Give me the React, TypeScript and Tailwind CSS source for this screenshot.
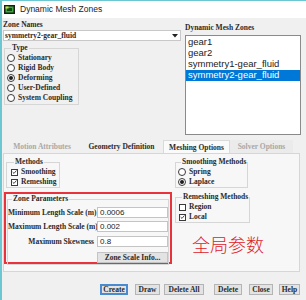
import React from "react";

const F = "font-['Liberation_Serif',serif] font-bold text-[7.5px] leading-[10px] text-[#2a2a2a] whitespace-nowrap";
const FD = "font-['Liberation_Serif',serif] font-bold text-[7.5px] leading-[13px] text-[#a8a8a8] whitespace-nowrap";
const FT = "font-['Liberation_Serif',serif] font-bold text-[7.5px] leading-[13px] text-[#2a2a2a] whitespace-nowrap";

function Radio({ checked, label }: { checked?: boolean; label: string }) {
  return (
    <div className="flex items-center h-[10px]">
      <span className="w-[8px] h-[8px] rounded-full border border-[#3a3a3a] bg-white flex items-center justify-center shrink-0">
        {checked && <span className="w-[4px] h-[4px] rounded-full bg-[#1e1e1e]" />}
      </span>
      <span className={`${F} ml-[3px]`}>{label}</span>
    </div>
  );
}

function Check({ checked, label }: { checked?: boolean; label: string }) {
  return (
    <div className="flex items-center h-[10px]">
      <span className="w-[7px] h-[7px] border border-[#3a3a3a] bg-white flex items-center justify-center shrink-0">
        {checked && (
          <svg width="6" height="6" viewBox="0 0 6 6">
            <path d="M0.8 3.1 L2.4 4.7 L5.3 1.2" stroke="#222" strokeWidth="1" fill="none" />
          </svg>
        )}
      </span>
      <span className={`${F} ml-[3px]`}>{label}</span>
    </div>
  );
}

function Btn({ label, w, primary, className }: { label: string; w: string; primary?: boolean; className: string }) {
  return (
    <div
      className={`${w} h-[11px] ${primary ? "border-2 border-[#4a8bd0]" : "border border-[#b4b4b4]"} bg-[#e3e3e3] flex items-center justify-center ${className}`}
    >
      <span className={F}>{label}</span>
    </div>
  );
}

export default function App() {
  return (
    <div className="w-[306px] h-[300px] bg-[#f0f0f0] border-l-2 border-t border-[#6cc7d3] flex flex-col overflow-hidden">
      {/* title bar */}
      <div className="h-[17px] bg-white flex items-center shrink-0">
        <svg width="11" height="9" viewBox="0 0 11 9" className="ml-[2px]">
          <rect x="0" y="0" width="11" height="9" fill="#1b1b1b" />
          <rect x="1.5" y="1.5" width="8" height="6" fill="#3aa83a" />
          <rect x="3" y="3" width="5" height="3" fill="#0d4d12" />
          <rect x="1.5" y="1.5" width="3" height="2" fill="#d9d930" />
        </svg>
        <span className="ml-[5px] font-['Liberation_Sans',sans-serif] text-[8.5px] text-[#222]">Dynamic Mesh Zones</span>
      </div>

      {/* top area */}
      <div className="flex shrink-0">
        <div className="ml-[1px] w-[178px] flex flex-col">
          <div className={`${F} mt-[2px]`}>Zone Names</div>
          <div className="h-[11px] bg-white border border-[#c8c8c8] flex items-center justify-between">
            <span className={`${F} ml-[1px]`}>symmetry2-gear_fluid</span>
            <svg width="6" height="4" viewBox="0 0 6 4" className="mr-[2px]">
              <path d="M0 0 L6 0 L3 3.5 Z" fill="#222" />
            </svg>
          </div>
          <fieldset className="mt-[2px] ml-[1px] w-[75px] border border-[#d6d6d6] pl-[2px] pb-[1px]">
            <legend className={`${F} ml-[4px] px-[1px]`}>Type</legend>
            <Radio label="Stationary" />
            <Radio label="Rigid Body" />
            <Radio checked label="Deforming" />
            <Radio label="User-Defined" />
            <Radio label="System Coupling" />
          </fieldset>
        </div>
        <div className="ml-[4px] w-[116px] flex flex-col">
          <div className={`${F} mt-[5px]`}>Dynamic Mesh Zones</div>
          <div className="mt-[2px] h-[100px] bg-white border border-[#8a8a8a] pt-[1px] flex flex-col">
            {["gear1", "gear2", "symmetry1-gear_fluid"].map((t) => (
              <div key={t} className="h-[11px] flex items-center pl-[2px] font-['Liberation_Sans',sans-serif] text-[9.5px] text-[#222]">
                {t}
              </div>
            ))}
            <div className="h-[11px] flex items-center pl-[2px] bg-[#0078d7] font-['Liberation_Sans',sans-serif] text-[9.5px] text-white">
              symmetry2-gear_fluid
            </div>
          </div>
        </div>
      </div>

      {/* tabs */}
      <div className="mt-[5px] h-[13px] flex shrink-0">
        <div className={`ml-[4px] w-[72px] text-center ${FD}`}>Motion Attributes</div>
        <div className={`ml-[2px] w-[83px] text-center ${FT}`}>Geometry Definition</div>
        <div className={`w-[67px] text-center bg-[#fafafa] border-t border-l border-r border-[#dadada] ${FT}`}>Meshing Options</div>
        <div className={`w-[63px] text-center bg-[#ebebeb] ${FD}`}>Solver Options</div>
      </div>

      {/* panel */}
      <div className="ml-[1px] w-[297px] h-[119px] border border-[#d6d6d6] bg-[#f7f7f7] flex shrink-0">
        <div className="w-[168px] flex flex-col">
          <fieldset className="mt-[3px] ml-[2px] w-[54px] border border-[#d6d6d6] pl-[4px]">
            <legend className={`${F} ml-[3px] px-[1px]`}>Methods</legend>
            <Check checked label="Smoothing" />
            <Check checked label="Remeshing" />
          </fieldset>
          <div className="mt-[4px] h-[72px] border-2 border-[#e8323c] flex flex-col">
            <fieldset className="mx-[1px] border border-[#d6d6d6] pb-[1px]">
              <legend className={`${F} leading-[6px] ml-[4px] px-[1px]`}>Zone Parameters</legend>
              <div className="flex items-center h-[11px] mt-[3px]">
                <span className={`${F} w-[86px] text-right`}>Minimum Length Scale (m)</span>
                <div className="ml-[3px] w-[71px] h-[11px] bg-white border border-[#c4c4c4] flex items-center">
                  <span className="ml-[2px] font-['Liberation_Sans',sans-serif] text-[8px] text-[#222]">0.0006</span>
                </div>
              </div>
              <div className="flex items-center h-[11px] mt-[3px]">
                <span className={`${F} w-[86px] text-right`}>Maximum Length Scale (m)</span>
                <div className="ml-[3px] w-[71px] h-[11px] bg-white border border-[#c4c4c4] flex items-center">
                  <span className="ml-[2px] font-['Liberation_Sans',sans-serif] text-[8px] text-[#222]">0.002</span>
                </div>
              </div>
              <div className="flex items-center h-[11px] mt-[4px]">
                <span className={`${F} w-[86px] text-right`}>Maximum Skewness</span>
                <div className="ml-[3px] w-[71px] h-[11px] bg-white border border-[#c4c4c4] flex items-center">
                  <span className="ml-[2px] font-['Liberation_Sans',sans-serif] text-[8px] text-[#222]">0.8</span>
                </div>
              </div>
              <div className="flex items-center h-[11px] mt-[5px]">
                <span className="w-[86px]" />
                <div className="ml-[3px] w-[71px] h-[11px] bg-[#e3e3e3] border border-[#c4c4c4] flex items-center justify-center">
                  <span className={F}>Zone Scale Info...</span>
                </div>
              </div>
            </fieldset>
          </div>
        </div>
        <div className="ml-[3px] w-[73px] flex flex-col">
          <fieldset className="mt-[3px] border border-[#d6d6d6] pl-[2px]">
            <legend className={`${F} ml-[3px] px-[1px]`}>Smoothing Methods</legend>
            <Radio label="Spring" />
            <Radio checked label="Laplace" />
          </fieldset>
          <fieldset className="mt-[4px] border border-[#d6d6d6] pl-[3px]">
            <legend className={`${F} ml-[3px] px-[1px]`}>Remeshing Methods</legend>
            <Check label="Region" />
            <Check checked label="Local" />
          </fieldset>
          <div className="mt-[12px] ml-[17px] font-['Noto_Sans_CJK_SC',sans-serif] font-light text-[18px] leading-[18px] text-[#e0202a] whitespace-nowrap">
            全局参数
          </div>
        </div>
      </div>

      {/* buttons */}
      <div className="mt-[12px] flex shrink-0">
        <Btn primary label="Create" w="w-[28px]" className="ml-[98px]" />
        <Btn label="Draw" w="w-[25px]" className="ml-[7px]" />
        <Btn label="Delete All" w="w-[40px]" className="ml-[4px]" />
        <Btn label="Delete" w="w-[28px]" className="ml-[10px]" />
        <Btn label="Close" w="w-[24px]" className="ml-[7px]" />
        <Btn label="Help" w="w-[21px]" className="ml-[6px]" />
      </div>
    </div>
  );
}
